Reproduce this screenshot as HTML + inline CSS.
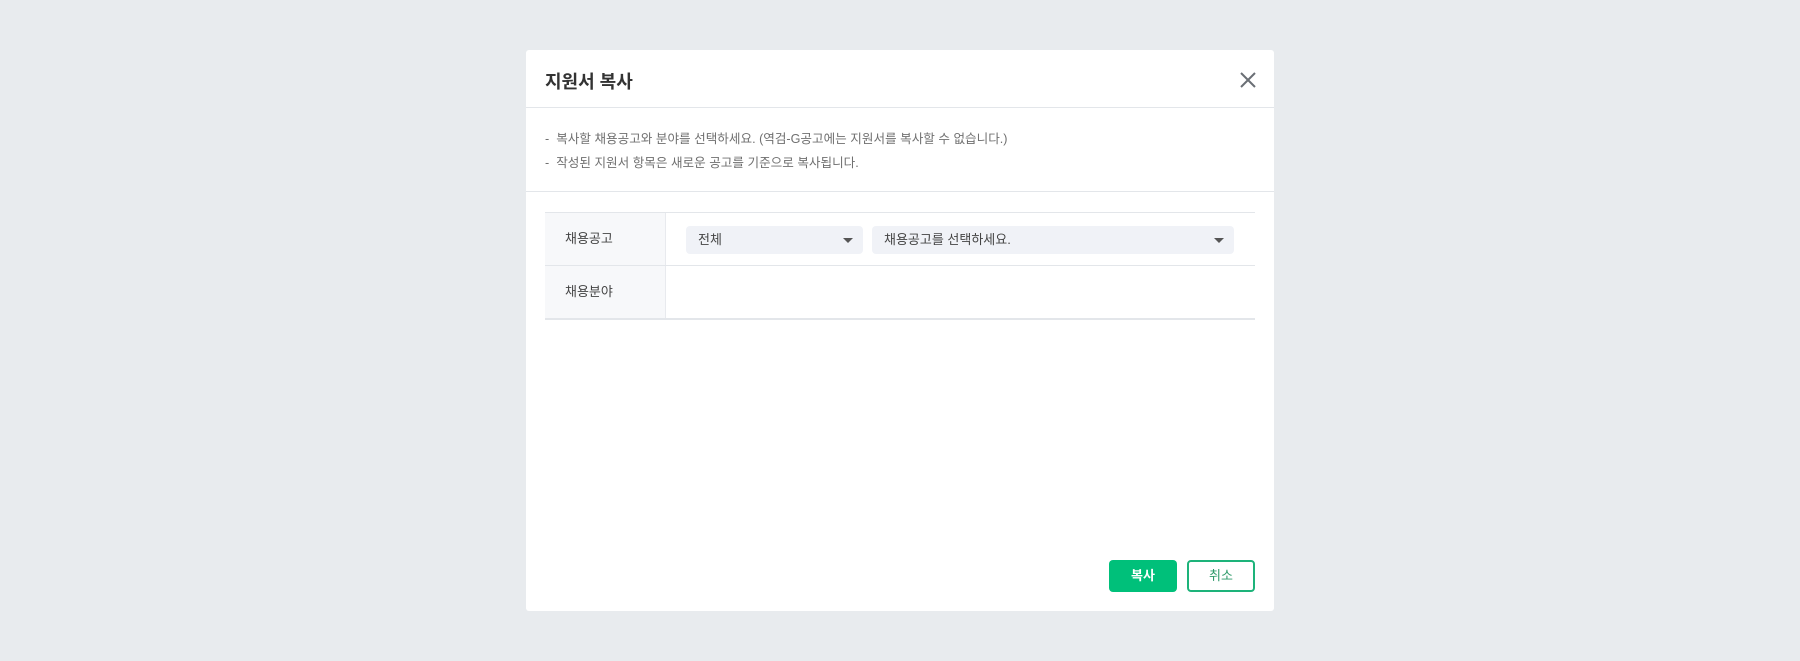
<!DOCTYPE html>
<html><head><meta charset="utf-8"><style>
*{margin:0;padding:0;box-sizing:border-box}
body{width:1800px;height:661px;background:#e8ebee;font-family:"Liberation Sans","Noto Sans CJK KR",sans-serif;position:relative;overflow:hidden}
.m{position:absolute;left:526px;top:50px;width:748px;height:561px;background:#fff;border-radius:3px}
.t{position:absolute;left:19px;top:18px;font-size:18px;font-weight:bold;color:#333}
.x{position:absolute;left:714px;top:22px}
.h1{position:absolute;left:0;right:0;top:57px;border-top:1px solid #e3e6ea}
.h2{position:absolute;left:0;right:0;top:141px;border-top:1px solid #e3e6ea}
.i{position:absolute;left:19px;font-size:12.6px;color:#707070}
.tb{position:absolute;left:19px;top:162px;width:710px;height:108px;border-top:1px solid #e3e6ea;border-bottom:1px solid #e3e6ea}
.r{height:53px;border-bottom:1px solid #e3e6ea;display:flex}
.r:last-child{border-bottom:none}
.lb{width:121px;background:#f7f8fa;border-right:1px solid #e8eaee;font-size:13px;color:#444;padding-left:20px;line-height:52px}
.s{position:absolute;top:13px;height:28px;background:#f0f2f7;border-radius:4px;font-size:13px;color:#444;line-height:28px;padding-left:12px}
.s:after{content:"";position:absolute;right:10px;top:12px;border-left:5px solid transparent;border-right:5px solid transparent;border-top:5px solid #555}
.b{position:absolute;top:510px;width:68px;height:32px;border-radius:4px;font-size:13px;text-align:center;line-height:32px}
</style></head><body>
<div class="m">
<div class="t">지원서 복사</div>
<svg class="x" width="16" height="16" viewBox="0 0 16 16"><path d="M1 1L15 15M15 1L1 15" stroke="#6a6f75" stroke-width="2"/></svg>
<div class="h1"></div>
<div class="i" style="top:78px">-&nbsp; 복사할 채용공고와 분야를 선택하세요. (역검-G공고에는 지원서를 복사할 수 없습니다.)</div>
<div class="i" style="top:102px">-&nbsp; 작성된 지원서 항목은 새로운 공고를 기준으로 복사됩니다.</div>
<div class="h2"></div>
<div class="tb">
<div class="r"><div class="lb">채용공고</div></div>
<div class="r"><div class="lb">채용분야</div></div>
<div class="s" style="left:141px;width:177px">전체</div>
<div class="s" style="left:327px;width:362px">채용공고를 선택하세요.</div>
</div>
<div class="b" style="left:583px;background:#00c07a;color:#fff;font-weight:bold">복사</div>
<div class="b" style="left:661px;border:2px solid #1db37a;color:#2e9a6a;line-height:28px">취소</div>
</div>
</body></html>
